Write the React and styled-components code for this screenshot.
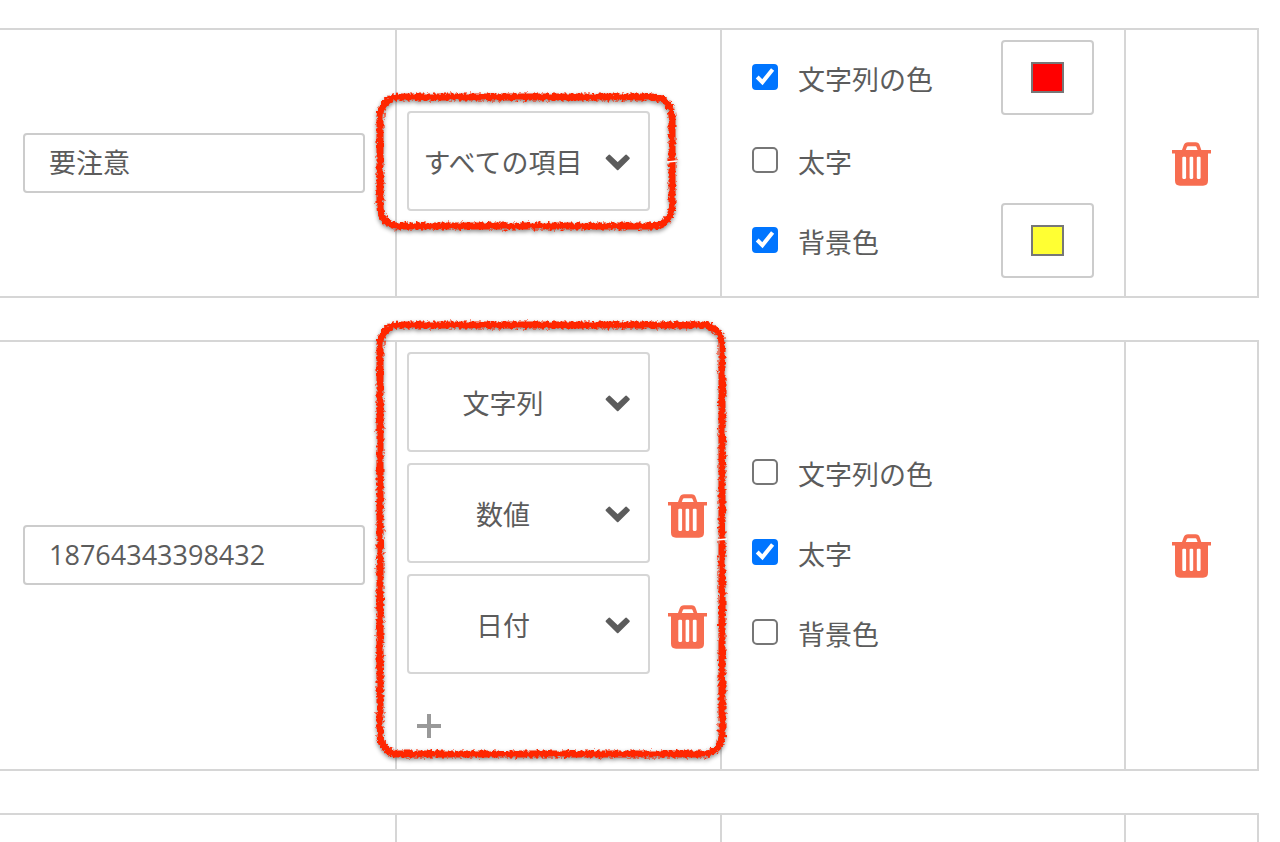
import React, { useState } from "react";
import styled, { createGlobalStyle, css } from "styled-components";

const GlobalStyle = createGlobalStyle`
  *, *::before, *::after { box-sizing: border-box; }
  body {
    margin: 0;
    background: #fff;
    color: #5c5c5c;
    font-family: "Open Sans", "Noto Sans CJK JP", sans-serif;
    font-size: 27px;
    line-height: 40px;
  }
  input, select, button { font: inherit; color: inherit; }
`;

const Page = styled.main`
  height: 100vh;
  overflow: hidden;
  padding-right: 21px;
`;

const RuleTable = styled.table`
  width: 100%;
  margin-top: -14px;
  table-layout: fixed;
  border-collapse: separate;
  border-spacing: 0 42px;
`;

const Column = styled.col`
  width: ${({ $width }) => ($width ? `${$width}px` : "auto")};
`;

const Cell = styled.td`
  padding: ${({ $padding }) => $padding || "0"};
  border: 2px solid #d6d6d6;
  border-right-width: 0;
  vertical-align: middle;
  &:first-child { border-left-width: 0; }
  &:last-child { border-right-width: 2px; text-align: center; }
`;

const EmptyRow = styled.tr`
  height: 270px;
`;

const TextInput = styled.input`
  display: block;
  width: 100%;
  height: 60px;
  padding: 0 24px 2px;
  border: 2px solid #ccc;
  border-radius: 4px;
  background: #fff;
`;

const FieldGroup = styled.div`
  position: relative;
  width: fit-content;
`;

const FieldList = styled.div`
  display: flex;
  flex-direction: column;
  gap: 11px;
`;

const FieldRow = styled.div`
  display: flex;
  align-items: center;
  gap: 18px;
`;

const SelectBox = styled.div`
  display: grid;
  width: 243px;
  height: 100px;
  align-items: center;
  > * { grid-area: 1 / 1; }
  svg {
    justify-self: end;
    margin: 3px 19px 0 0;
    pointer-events: none;
  }
`;

const Select = styled.select`
  appearance: none;
  width: 100%;
  height: 100%;
  padding: 3px 51px 0 0;
  border: 2px solid #d6d6d6;
  border-radius: 4px;
  background: #fff;
  text-align: center;
  text-align-last: center;
`;

const iconButton = css`
  border: 0;
  background: none;
  cursor: pointer;
  svg { display: block; }
`;

const DeleteButton = styled.button`
  ${iconButton}
  display: inline-block;
  padding: 5px 0 0;
  color: #f76d50;
  vertical-align: middle;
`;

const AddButton = styled.button`
  ${iconButton}
  display: block;
  margin: 30px 0 7px;
  padding: 10px;
  color: #999;
`;

const OptionList = styled.div`
  display: flex;
  flex-direction: column;
  gap: 5px;
`;

const Option = styled.div`
  display: flex;
  justify-content: space-between;
  align-items: center;
  height: 75px;
  margin-bottom: ${({ $withPicker }) => ($withPicker ? "3px" : "0")};
`;

const CheckLabel = styled.label`
  display: flex;
  align-items: center;
  gap: 20px;
`;

const CheckBox = styled.span`
  display: grid;
  margin-bottom: 2px;
  > * { grid-area: 1 / 1; }
  svg { pointer-events: none; }
`;

const Checkbox = styled.input`
  appearance: none;
  width: 26px;
  height: 26px;
  margin: 0;
  border: 2px solid #767676;
  border-radius: 5px;
  background: #fff;
  &:checked {
    border-color: #0075ff;
    border-radius: 4px;
    background: #0075ff;
  }
`;

const LabelText = styled.span`
  padding-top: 4px;
`;

const ColorInput = styled.input`
  appearance: none;
  width: 93px;
  height: 75px;
  padding: 20px 28px;
  border: 2px solid #ccc;
  border-radius: 4px;
  background: #fff;
  &::-webkit-color-swatch-wrapper { padding: 0; }
  &::-webkit-color-swatch {
    border: 2px solid #777;
    border-radius: 0;
  }
`;

const MarkerSvg = styled.svg`
  position: absolute;
  z-index: 1;
  top: -${({ $top }) => $top}px;
  left: -31px;
  width: calc(100% + 31px + ${({ $right }) => $right}px);
  height: calc(100% + ${({ $top, $bottom }) => $top + $bottom}px);
  overflow: visible;
  pointer-events: none;
  filter: drop-shadow(0 2px 2px rgba(0, 0, 0, 0.45));
  rect {
    width: calc(100% - 8px);
    height: calc(100% - 8px);
  }
`;

function Marker({ id, top, right, bottom }) {
  return (
    <MarkerSvg $top={top} $right={right} $bottom={bottom} aria-hidden="true">
      <defs>
        <filter
          id={id}
          filterUnits="userSpaceOnUse"
          x="-10"
          y="-10"
          width="400"
          height="480"
          colorInterpolationFilters="sRGB"
        >
          <feTurbulence type="fractalNoise" baseFrequency="0.35" numOctaves="2" seed="4" result="noise" />
          <feDisplacementMap in="SourceGraphic" in2="noise" scale="6" xChannelSelector="R" yChannelSelector="G" />
        </filter>
      </defs>
      <g filter={`url(#${id})`}>
        <rect x="4" y="4" rx="19" fill="none" stroke="#ff2600" strokeWidth="7" />
      </g>
      <svg x="100%" y="50%" overflow="visible">
        <path d="M-9 0.5L1 -0.5" stroke="#fff" strokeWidth="1.5" />
      </svg>
    </MarkerSvg>
  );
}

function ChevronIcon() {
  return (
    <svg width="26" height="17" viewBox="0 0 26 17" aria-hidden="true">
      <path
        d="M4.2 1.6L12.7 9.6L21.2 1.6L23.8 4.3L12.7 15.2L1.6 4.3Z"
        fill="#5c5c5c"
        stroke="#5c5c5c"
        strokeWidth="2"
        strokeLinejoin="round"
      />
    </svg>
  );
}

function TickIcon() {
  return (
    <svg width="26" height="26" viewBox="0 0 26 26" aria-hidden="true">
      <path d="M5.2 13L10.4 18.2L20.6 5.4" fill="none" stroke="#fff" strokeWidth="4" />
    </svg>
  );
}

function TrashIcon() {
  return (
    <svg width="39" height="44" viewBox="0 0 39 44" fill="currentColor" aria-hidden="true">
      <path
        fillRule="evenodd"
        d="M0 8H10L11.6 3.4Q12.8 0.3 16 0.3H23.6Q26.8 0.3 27.8 3.4L29.3 8H39V11.4H36V38.8Q36 43.7 31 43.7H8Q3 43.7 3 38.8V11.4H0Z
        M13.8 8H25.6L24.5 4.9Q24.3 4.3 23.5 4.3H16Q15.2 4.3 14.9 4.9Z
        M11.4 14.7Q10.3 14.7 10.3 15.8V35.8Q10.3 36.9 11.4 36.9H13Q14.1 36.9 14.1 35.8V15.8Q14.1 14.7 13 14.7Z
        M18.7 14.7Q17.6 14.7 17.6 15.8V35.8Q17.6 36.9 18.7 36.9H20.1Q21.2 36.9 21.2 35.8V15.8Q21.2 14.7 20.1 14.7Z
        M25.9 14.7Q24.8 14.7 24.8 15.8V35.8Q24.8 36.9 25.9 36.9H27.5Q28.6 36.9 28.6 35.8V15.8Q28.6 14.7 27.5 14.7Z"
      />
    </svg>
  );
}

function PlusIcon() {
  return (
    <svg width="24" height="24" viewBox="0 0 24 24" aria-hidden="true">
      <path d="M12 0V24M0 12H24" stroke="currentColor" strokeWidth="4" />
    </svg>
  );
}

const FIELDS = ["すべての項目", "文字列", "数値", "日付"];

function FieldSelect({ value, removable }) {
  return (
    <FieldRow>
      <SelectBox>
        <Select defaultValue={value} aria-label="項目">
          {FIELDS.map((name) => (
            <option key={name}>{name}</option>
          ))}
        </Select>
        <ChevronIcon />
      </SelectBox>
      {removable && (
        <DeleteButton type="button" aria-label="項目を削除">
          <TrashIcon />
        </DeleteButton>
      )}
    </FieldRow>
  );
}

function StyleOption({ label, initial, color }) {
  const [checked, setChecked] = useState(initial);
  const showPicker = Boolean(color) && checked;
  return (
    <Option $withPicker={showPicker}>
      <CheckLabel>
        <CheckBox>
          <Checkbox type="checkbox" checked={checked} onChange={(e) => setChecked(e.target.checked)} />
          {checked && <TickIcon />}
        </CheckBox>
        <LabelText>{label}</LabelText>
      </CheckLabel>
      {showPicker && <ColorInput type="color" defaultValue={color} aria-label={label} />}
    </Option>
  );
}

const RULES = [
  {
    id: "all",
    text: "要注意",
    fields: ["すべての項目"],
    marker: { top: 18, right: 26, bottom: 19 },
    options: [true, false, true],
  },
  {
    id: "some",
    text: "18764343398432",
    fields: ["文字列", "数値", "日付"],
    canAdd: true,
    marker: { top: 31, right: 19, bottom: 10 },
    options: [false, true, false],
  },
];

function RuleRow({ rule }) {
  return (
    <tr>
      <Cell $padding="0 30px 1px 23px">
        <TextInput type="text" defaultValue={rule.text} aria-label="キーワード" />
      </Cell>
      <Cell $padding="10px 10px 14px">
        <FieldGroup>
          <FieldList>
            {rule.fields.map((name, i) => (
              <FieldSelect key={name} value={name} removable={i > 0} />
            ))}
          </FieldList>
          {rule.canAdd && (
            <AddButton type="button" aria-label="項目を追加">
              <PlusIcon />
            </AddButton>
          )}
          <Marker id={`marker-${rule.id}`} {...rule.marker} />
        </FieldGroup>
      </Cell>
      <Cell $padding="10px 30px 15px">
        <OptionList>
          <StyleOption label="文字列の色" initial={rule.options[0]} color="#ff0000" />
          <StyleOption label="太字" initial={rule.options[1]} />
          <StyleOption label="背景色" initial={rule.options[2]} color="#ffff33" />
        </OptionList>
      </Cell>
      <Cell $padding="0 0 4px">
        <DeleteButton type="button" aria-label="条件を削除">
          <TrashIcon />
        </DeleteButton>
      </Cell>
    </tr>
  );
}

export default function App() {
  return (
    <>
      <GlobalStyle />
      <Page>
        <RuleTable>
          <colgroup>
            <Column />
            <Column $width={325} />
            <Column $width={404} />
            <Column $width={135} />
          </colgroup>
          <tbody>
            {RULES.map((rule) => (
              <RuleRow key={rule.id} rule={rule} />
            ))}
            <EmptyRow>
              <Cell />
              <Cell />
              <Cell />
              <Cell />
            </EmptyRow>
          </tbody>
        </RuleTable>
      </Page>
    </>
  );
}
